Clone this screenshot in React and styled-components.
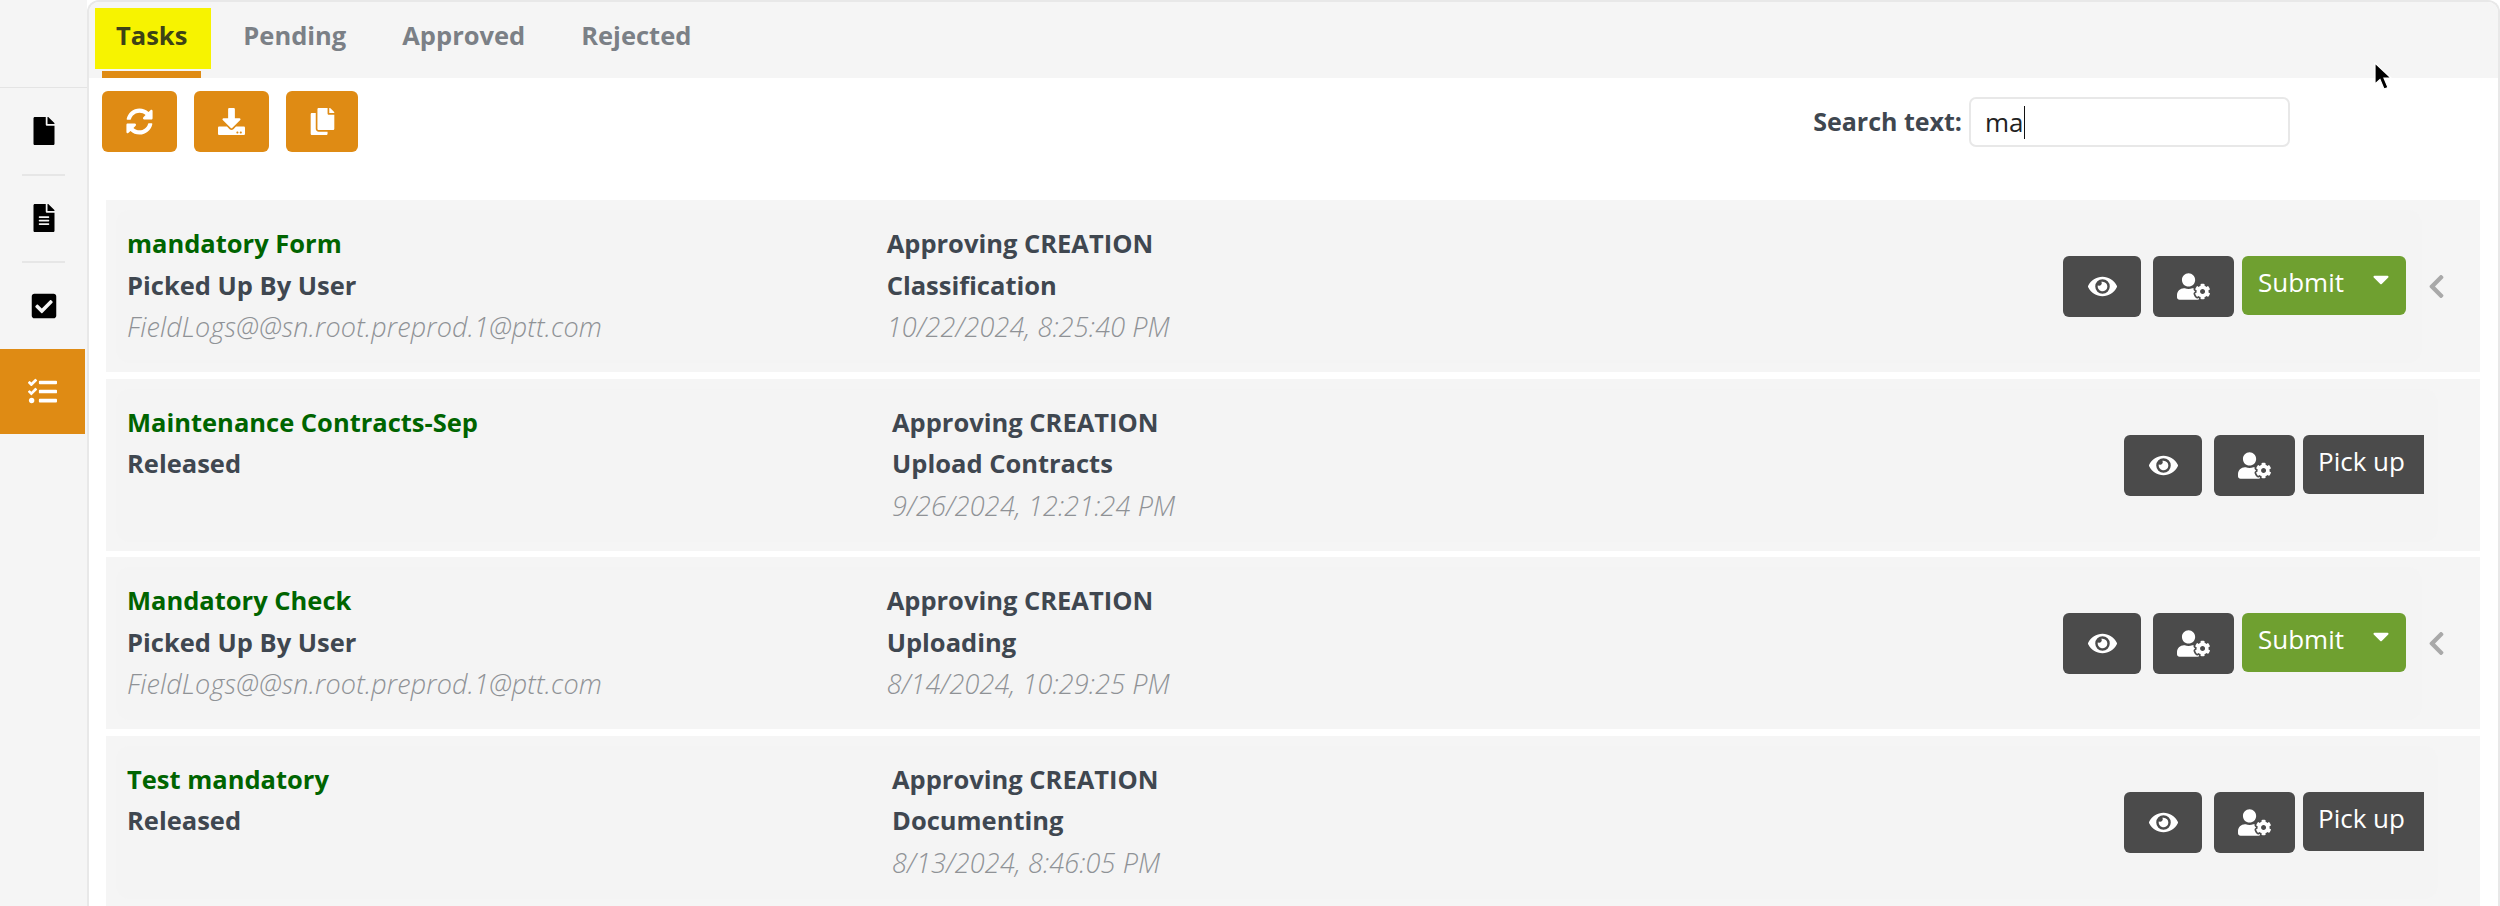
import React from 'react';
import styled, { createGlobalStyle } from 'styled-components';
import {
  FaFile, FaFileAlt, FaCheckSquare, FaTasks, FaSyncAlt, FaDownload, FaCopy,
  FaEye, FaUserCog, FaCaretDown, FaChevronLeft,
} from 'react-icons/fa';

const GlobalStyle = createGlobalStyle`
  html, body {
    margin: 0;
    padding: 0;
    background: #fff;
    font-family: 'Open Sans', 'Lato', sans-serif;
  }
`;

const Page = styled.div`
  position: relative;
  display: flex;
  width: 2500px;
  height: 906px;
  overflow: hidden;
`;

const Sidebar = styled.nav`
  flex: none;
  width: 87px;
  background: #f5f5f5;
`;

const SidebarTop = styled.div`
  height: 87px;
  border-bottom: 1px solid #e4e4e4;
`;

const SideItem = styled.div`
  display: flex;
  align-items: center;
  justify-content: center;
  height: 85.5px;
  margin-right: ${(p) => (p.$active ? '2px' : '0')};
  color: ${(p) => (p.$active ? '#fff' : '#000')};
  background: ${(p) => (p.$active ? '#df8b14' : 'transparent')};
  font-size: ${(p) => p.$size}px;
`;

const SideDivider = styled.div`
  height: 2px;
  margin: 0 22px;
  background: #e6e6e6;
`;

const Panel = styled.main`
  flex: 1;
  min-width: 0;
  border: 2px solid #e8e8e8;
  border-bottom: 0;
  border-radius: 12px 12px 0 0;
`;

const TabBar = styled.div`
  display: flex;
  height: 76px;
  padding-left: 13px;
  background: #f5f5f5;
  border-top-right-radius: 10px;
  border-top-left-radius: 10px;
`;

const Tab = styled.div`
  position: relative;
  display: flex;
  align-items: center;
  height: 69px;
  padding: 0 14px;
  margin-right: 28px;
  font-size: 25.5px;
  font-weight: 700;
  color: ${(p) => (p.$active ? '#3d4216' : '#7b8086')};
  border-bottom: ${(p) => (p.$active ? '7px solid #df8b14' : '7px solid transparent')};
  span { position: relative; top: -2px; }
  ${(p) => p.$active && `
    &::before {
      content: '';
      position: absolute;
      left: -7px;
      right: -10px;
      top: 6px;
      height: 61px;
      background: #f7f300;
    }
  `}
`;

const Toolbar = styled.div`
  display: flex;
  justify-content: space-between;
  align-items: flex-start;
  height: 122px;
  box-sizing: border-box;
  padding: 13px 208px 0 13px;
`;

const ToolGroup = styled.div`
  display: flex;
  gap: 17px;
`;

const ToolButton = styled.button`
  display: flex;
  align-items: center;
  justify-content: center;
  width: ${(p) => p.$width}px;
  height: 61px;
  padding: 0;
  border: 0;
  border-radius: 6px;
  background: #df8b14;
  color: #fff;
  font-size: 27px;
`;

const Search = styled.div`
  display: flex;
  align-items: center;
  gap: 7px;
  margin-top: 6px;
`;

const SearchLabel = styled.label`
  position: relative;
  top: -1px;
  font-size: 25px;
  font-weight: 700;
  color: #3f4750;
`;

const SearchBox = styled.div`
  display: flex;
  align-items: center;
  box-sizing: border-box;
  width: 321px;
  height: 50px;
  padding-left: 14px;
  border: 2px solid #e8e8e8;
  border-radius: 7px;
  font-size: 26px;
  color: #222;
`;

const TextCaret = styled.span`
  width: 1.5px;
  height: 33px;
  background: #111;
`;

const List = styled.div`
  display: flex;
  flex-direction: column;
  gap: 6.6px;
  margin-left: 17px;
  margin-right: 18px;
`;

const Row = styled.section`
  flex: none;
  display: flex;
  box-sizing: border-box;
  height: 172px;
  padding: 10px 42px 9px 10px;
  background: #f5f5f5;
`;

const Card = styled.div`
  flex: 1;
  min-width: 0;
  display: grid;
  grid-template-columns: 1fr 1fr 1fr;
  border-radius: 14px;
  background: #f4f4f4;
`;

const Column = styled.div`
  padding: 13px 0 0 ${(p) => p.$pad}px;
`;

const Title = styled.div`
  font-size: 25.5px;
  line-height: 41.5px;
  font-weight: 700;
  color: #006400;
`;

const Strong = styled.div`
  font-size: 25.5px;
  line-height: 41.5px;
  font-weight: 700;
  color: #3f4750;
`;

const Muted = styled.div`
  font-size: 27px;
  line-height: 41.5px;
  font-style: italic;
  font-weight: 300;
  letter-spacing: 0.15px;
  color: #8f9296;
`;

const Actions = styled.div`
  display: flex;
  justify-content: flex-end;
  align-items: flex-start;
  padding: 46px ${(p) => p.$pad}px 0 0;
`;

const IconButton = styled.button`
  display: flex;
  align-items: center;
  justify-content: center;
  width: ${(p) => p.$width}px;
  height: 61px;
  padding: 0;
  margin-right: ${(p) => p.$gap}px;
  border: 0;
  border-radius: 6px;
  background: #4b4b4b;
  color: #fff;
  font-size: ${(p) => p.$icon}px;
`;

const PickUp = styled.button`
  width: 121px;
  height: 59px;
  padding: 0 4px 6px 0;
  border: 0;
  border-radius: 6px 0 0 6px;
  background: #4b4b4b;
  color: #fff;
  font-family: inherit;
  font-size: 26px;
`;

const Submit = styled.button`
  display: flex;
  justify-content: space-between;
  box-sizing: border-box;
  width: 164px;
  height: 59px;
  padding: 8px 12px 0 16px;
  border: 0;
  border-radius: 6px;
  background: #6fa030;
  color: #fff;
  font-family: inherit;
  font-size: 26px;
  svg { margin-top: 2px; }
`;

const Chevron = styled.div`
  flex: none;
  display: flex;
  align-items: center;
  width: 16px;
  color: #a9a9a9;
  font-size: 27px;
  svg { margin-left: 1px; flex: none; }
`;

const Pointer = styled.svg`
  position: absolute;
  left: 2373px;
  top: 62px;
  width: 20px;
  height: 30px;
`;

const rows = [
  { title: 'mandatory Form', status: 'Picked Up By User', user: 'FieldLogs@@sn.root.preprod.1@ptt.com', step: 'Classification', date: '10/22/2024, 8:25:40 PM', picked: true },
  { title: 'Maintenance Contracts-Sep', status: 'Released', step: 'Upload Contracts', date: '9/26/2024, 12:21:24 PM' },
  { title: 'Mandatory Check', status: 'Picked Up By User', user: 'FieldLogs@@sn.root.preprod.1@ptt.com', step: 'Uploading', date: '8/14/2024, 10:29:25 PM', picked: true },
  { title: 'Test mandatory', status: 'Released', step: 'Documenting', date: '8/13/2024, 8:46:05 PM' },
];

export default function App() {
  return (
    <Page>
      <GlobalStyle />
      <Sidebar>
        <SidebarTop />
        <SideItem $size={28}><FaFile /></SideItem>
        <SideDivider />
        <SideItem $size={28}><FaFileAlt /></SideItem>
        <SideDivider />
        <SideItem $size={28}><FaCheckSquare /></SideItem>
        <SideItem $active $size={29}><FaTasks /></SideItem>
      </Sidebar>
      <Panel>
        <TabBar>
          <Tab $active><span>Tasks</span></Tab>
          <Tab><span>Pending</span></Tab>
          <Tab><span>Approved</span></Tab>
          <Tab><span>Rejected</span></Tab>
        </TabBar>
        <Toolbar>
          <ToolGroup>
            <ToolButton $width={75}><FaSyncAlt /></ToolButton>
            <ToolButton $width={75}><FaDownload /></ToolButton>
            <ToolButton $width={72}><FaCopy /></ToolButton>
          </ToolGroup>
          <Search>
            <SearchLabel>Search text:</SearchLabel>
            <SearchBox>ma<TextCaret /></SearchBox>
          </Search>
        </Toolbar>
        <List>
          {rows.map((row) => (
            <Row key={row.title}>
              <Card>
                <Column $pad={11}>
                  <Title>{row.title}</Title>
                  <Strong>{row.status}</Strong>
                  {row.user && <Muted>{row.user}</Muted>}
                </Column>
                <Column $pad={2}>
                  <Strong>Approving CREATION</Strong>
                  <Strong>{row.step}</Strong>
                  <Muted>{row.date}</Muted>
                </Column>
                <Actions $pad={row.picked ? 16 : 14}>
                  <IconButton $width={78} $gap={12} $icon={29}><FaEye /></IconButton>
                  <IconButton $width={81} $gap={8} $icon={33}><FaUserCog /></IconButton>
                  {row.picked
                    ? <Submit>Submit<FaCaretDown /></Submit>
                    : <PickUp>Pick up</PickUp>}
                </Actions>
              </Card>
              {row.picked && <Chevron><FaChevronLeft /></Chevron>}
            </Row>
          ))}
        </List>
      </Panel>
      <Pointer viewBox="0 0 20 30">
        <path d="M2 1 L2 22 L7 17.5 L11 27 L15 25.5 L11 16 L18 16 Z" fill="#000" stroke="#fff" strokeWidth="1.2" />
      </Pointer>
    </Page>
  );
}
